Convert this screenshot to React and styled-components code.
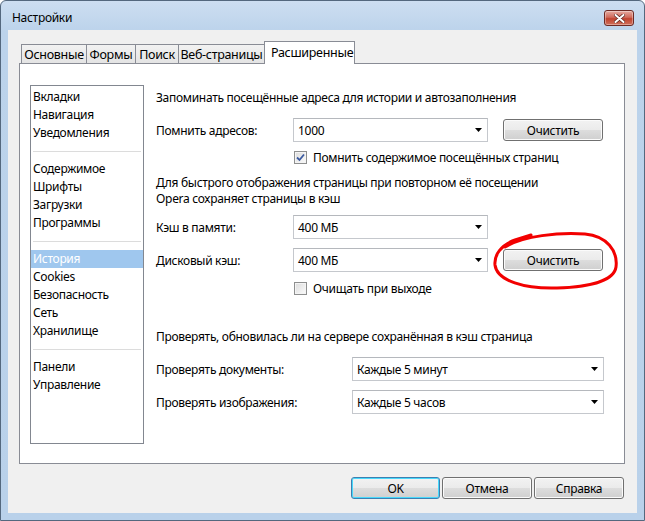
import React from "react";
import styled, { createGlobalStyle } from "styled-components";

const Global = createGlobalStyle`
  html, body {
    margin: 0;
    padding: 0;
    background: #ffffff;
  }
  body {
    font-family: "Noto Sans", "DejaVu Sans", sans-serif;
    font-size: 12px;
    letter-spacing: -0.3px;
    color: #000;
  }
`;

const Window = styled.div`
  position: relative;
  width: 645px;
  height: 521px;
  box-sizing: border-box;
  border: 1px solid #54687e;
  border-radius: 6px 6px 0 0;
  background: linear-gradient(#cddef1, #bcd3eb 30px, #b9d1ea);
  display: flex;
  flex-direction: column;
`;

const TitleBar = styled.div`
  height: 29px;
  display: flex;
  align-items: flex-start;
  padding-left: 11px;
`;

const Title = styled.div`
  margin-top: 9px;
  line-height: 16px;
`;

const CloseButton = styled.div`
  margin: 9px 10px 0 auto;
  width: 30px;
  height: 16px;
  box-sizing: border-box;
  border: 1px solid #6d2a24;
  border-radius: 3px;
  background: linear-gradient(#e6aba1, #d06a5b 45%, #c0432f 55%, #d0705c);
  box-shadow: inset 0 0 0 1px rgba(255, 255, 255, 0.35);
  display: flex;
  align-items: center;
  justify-content: center;
`;

const Client = styled.div`
  flex: 1;
  margin: 0 7px 7px;
  background: #f0f0f0;
  display: flex;
  flex-direction: column;
  padding: 11px 12px 0 11px;
  min-height: 0;
`;

const TabStrip = styled.div`
  display: flex;
  align-items: flex-end;
  height: 23px;
  padding-left: 2px;
  margin-bottom: -1px;
  position: relative;
  z-index: 1;
`;

const Tab = styled.div`
  box-sizing: border-box;
  width: ${(p) => p.$w}px;
  height: ${(p) => (p.$active ? 23 : 19)}px;
  margin-bottom: ${(p) => (p.$active ? 0 : 1)}px;
  margin-left: ${(p) => (p.$first ? 0 : -1)}px;
  border: 1px solid #898c95;
  border-bottom: none;
  background: ${(p) => (p.$active ? "#ffffff" : "linear-gradient(#f2f2f2, #e4e4e4)")};
  display: flex;
  align-items: center;
  justify-content: ${(p) => (p.$active ? "flex-start" : "center")};
  padding: ${(p) => (p.$active ? "0 0 2px 6px" : "0")};
  font-size: 12.5px;
  position: relative;
  z-index: ${(p) => (p.$active ? 2 : 1)};
  white-space: nowrap;
`;

const Panel = styled.div`
  flex: 1;
  border: 1px solid #898c95;
  background: #ffffff;
  display: flex;
  align-items: flex-start;
  padding: 21px 20px 0 10px;
`;

const Sidebar = styled.div`
  box-sizing: border-box;
  width: 114px;
  height: 359px;
  border: 1px solid #828790;
  padding: 2px 0;
  flex-shrink: 0;
`;

const SideItem = styled.div`
  height: 18px;
  line-height: 17px;
  padding-left: 2px;
  background: ${(p) => (p.$selected ? "#9fc7ee" : "transparent")};
  color: ${(p) => (p.$selected ? "#ffffff" : "#000")};
`;

const SideSeparator = styled.div`
  height: 18px;
  display: flex;
  align-items: center;
  padding: 0 2px;
  &::after {
    content: "";
    flex: 1;
    height: 1px;
    background: #dcdcdc;
  }
`;

const Content = styled.div`
  flex: 1;
  margin-left: 12px;
  display: flex;
  flex-direction: column;
`;

const Heading = styled.div`
  margin-top: ${(p) => p.$mt}px;
  line-height: 16px;
`;

const Paragraph = styled.div`
  margin-top: 10px;
  line-height: 16px;
`;

const FieldRow = styled.div`
  margin-top: ${(p) => p.$mt}px;
  height: 24px;
  display: flex;
  align-items: center;
`;

const Label = styled.div`
  width: ${(p) => p.$w}px;
  flex-shrink: 0;
`;

const Select = styled.div`
  box-sizing: border-box;
  width: ${(p) => p.$w}px;
  height: 24px;
  border: 1px solid #c5c8cd;
  border-top-color: #b5b8bd;
  background: #ffffff;
  display: flex;
  align-items: center;
  padding: 0 5px 0 4px;
  span {
    flex: 1;
  }
`;

const Button = styled.div`
  box-sizing: border-box;
  width: ${(p) => p.$w}px;
  height: 22px;
  margin-left: ${(p) => p.$ml || 0}px;
  border: 1px solid ${(p) => (p.$default ? "#3c7fb1" : "#707070")};
  border-radius: 3px;
  background: linear-gradient(#f2f2f2 0%, #ebebeb 48%, #dddddd 52%, #cfcfcf 100%);
  box-shadow: inset 0 0 0 1px ${(p) => (p.$default ? "#48d8fb" : "#fbfbfb")};
  display: flex;
  align-items: center;
  justify-content: center;
  flex-shrink: 0;
`;

const CheckRow = styled.div`
  margin-top: ${(p) => p.$mt}px;
  height: 16px;
  display: flex;
  align-items: center;
  padding-left: 138px;
`;

const Box = styled.div`
  box-sizing: border-box;
  width: 13px;
  height: 13px;
  border: 1px solid #8e8f8f;
  background: linear-gradient(135deg, #dcdcdc, #fbfbfb);
  box-shadow: inset 0 0 0 1px #f4f4f4;
  display: flex;
  align-items: center;
  justify-content: center;
  margin-right: 6px;
`;

const Footer = styled.div`
  height: 49px;
  display: flex;
  justify-content: flex-end;
  align-items: flex-start;
  padding-top: 13px;
  box-sizing: border-box;
  gap: 2px;
  padding-right: 1px;
`;

const Scribble = styled.svg`
  position: absolute;
  left: 488px;
  top: 228px;
  pointer-events: none;
`;

const Arrow = () => (
  <svg width="7" height="4" viewBox="0 0 7 4">
    <path d="M0 0H7L3.5 4Z" fill="#000" />
  </svg>
);

const Combo = ({ w, children }) => (
  <Select $w={w}>
    <span>{children}</span>
    <Arrow />
  </Select>
);

const Check = ({ checked }) => (
  <Box>
    {checked && (
      <svg width="9" height="9" viewBox="0 0 9 9">
        <path d="M1 4.5L3.5 7L8 1.5" fill="none" stroke="#3b5aa0" strokeWidth="1.8" />
      </svg>
    )}
  </Box>
);

const tabs = [
  { label: "Основные", w: 66 },
  { label: "Формы", w: 50 },
  { label: "Поиск", w: 44 },
  { label: "Веб-страницы", w: 87 },
  { label: "Расширенные", w: 91, active: true },
];

const sideGroups = [
  ["Вкладки", "Навигация", "Уведомления"],
  ["Содержимое", "Шрифты", "Загрузки", "Программы"],
  ["История", "Cookies", "Безопасность", "Сеть", "Хранилище"],
  ["Панели", "Управление"],
];

export default function App() {
  return (
    <>
      <Global />
      <Window>
        <TitleBar>
          <Title>Настройки</Title>
          <CloseButton>
            <svg width="11" height="9" viewBox="0 0 11 9">
              <path d="M1.5 1L9.5 8M9.5 1L1.5 8" stroke="#5a2620" strokeWidth="3.4" strokeLinecap="round" />
              <path d="M1.5 1L9.5 8M9.5 1L1.5 8" stroke="#ffffff" strokeWidth="2" strokeLinecap="round" />
            </svg>
          </CloseButton>
        </TitleBar>
        <Client>
          <TabStrip>
            {tabs.map((t, i) => (
              <Tab key={t.label} $w={t.w} $active={t.active} $first={i === 0}>
                {t.label}
              </Tab>
            ))}
          </TabStrip>
          <Panel>
            <Sidebar>
              {sideGroups.map((group, gi) => (
                <React.Fragment key={gi}>
                  {gi > 0 && <SideSeparator />}
                  {group.map((item) => (
                    <SideItem key={item} $selected={item === "История"}>
                      {item}
                    </SideItem>
                  ))}
                </React.Fragment>
              ))}
            </Sidebar>
            <Content>
              <Heading $mt={5}>Запоминать посещённые адреса для истории и автозаполнения</Heading>
              <FieldRow $mt={12}>
                <Label $w={137}>Помнить адресов:</Label>
                <Combo w={195}>1000</Combo>
                <Button $w={100} $ml={15}>Очистить</Button>
              </FieldRow>
              <CheckRow $mt={7}>
                <Check checked />
                Помнить содержимое посещённых страниц
              </CheckRow>
              <Paragraph>
                Для быстрого отображения страницы при повторном её посещении
                <br />
                Opera сохраняет страницы в кэш
              </Paragraph>
              <FieldRow $mt={8}>
                <Label $w={137}>Кэш в памяти:</Label>
                <Combo w={195}>400 МБ</Combo>
              </FieldRow>
              <FieldRow $mt={9}>
                <Label $w={137}>Дисковый кэш:</Label>
                <Combo w={195}>400 МБ</Combo>
                <Button $w={100} $ml={15}>Очистить</Button>
              </FieldRow>
              <CheckRow $mt={8}>
                <Check />
                Очищать при выходе
              </CheckRow>
              <Heading $mt={33}>Проверять, обновилась ли на сервере сохранённая в кэш страница</Heading>
              <FieldRow $mt={12}>
                <Label $w={196}>Проверять документы:</Label>
                <Combo w={252}>Каждые 5 минут</Combo>
              </FieldRow>
              <FieldRow $mt={9}>
                <Label $w={196}>Проверять изображения:</Label>
                <Combo w={252}>Каждые 5 часов</Combo>
              </FieldRow>
            </Content>
          </Panel>
          <Footer>
            <Button $w={89} $default>OK</Button>
            <Button $w={90}>Отмена</Button>
            <Button $w={90}>Справка</Button>
          </Footer>
        </Client>
        <Scribble width="132" height="64" viewBox="0 0 132 64">
          <path
            d="M16 18C34 7 70 3 96 5C118 7 129 22 127 38C125 52 100 58 68 59C36 60 8 52 6 36C5 26 12 16 26 11L42 6"
            fill="none"
            stroke="#f20000"
            strokeWidth="3"
            strokeLinecap="round"
          />
        </Scribble>
      </Window>
    </>
  );
}
